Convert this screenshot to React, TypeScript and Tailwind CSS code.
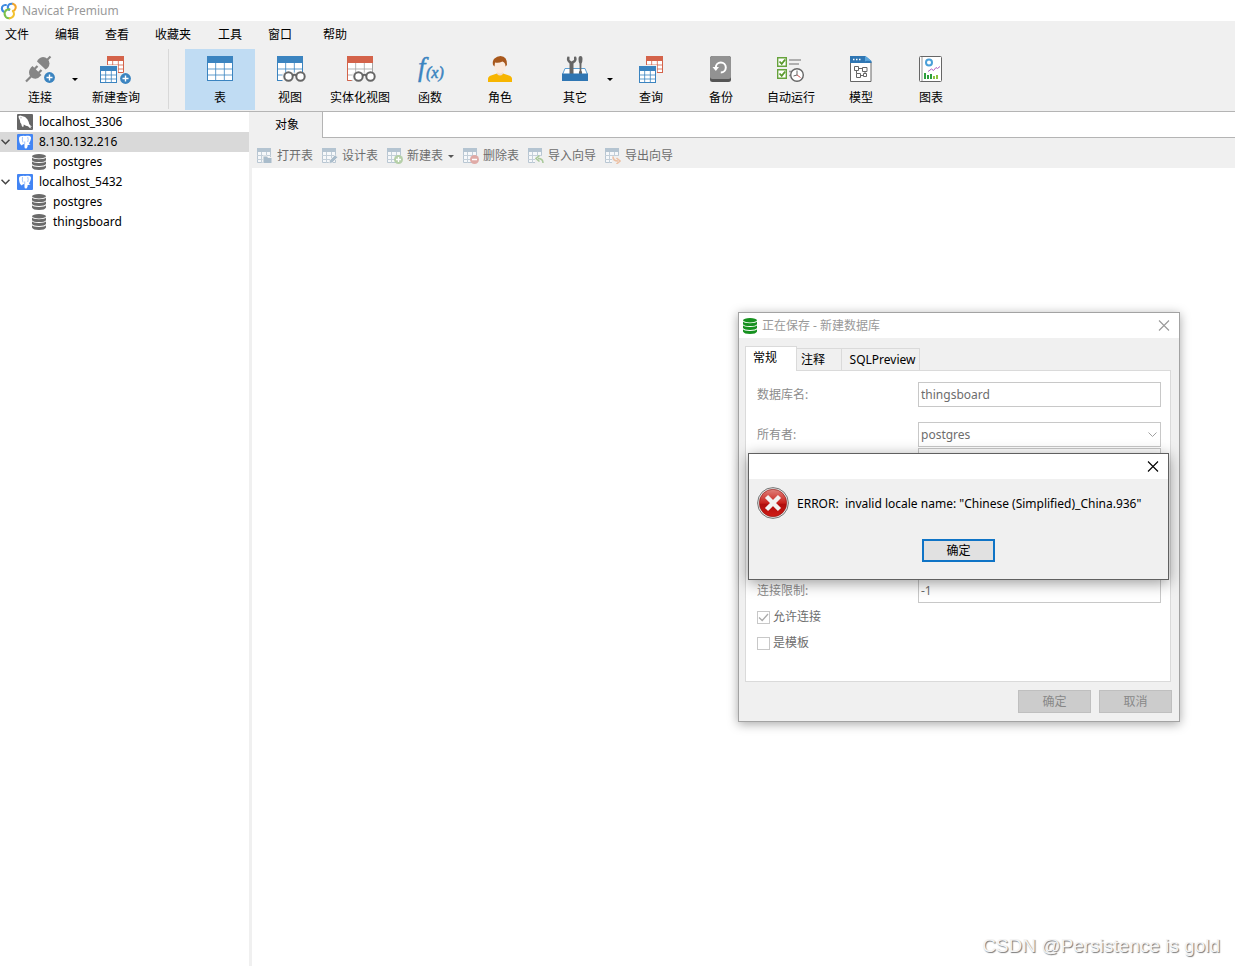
import { useState } from "react";
import type { ReactNode } from "react";

const BLUE = "#3b84c0";
const RED = "#d4634a";

/* ---------- icons ---------- */

function Grid({
  x,
  y,
  w,
  h,
  color,
  head = 5,
}: {
  x: number;
  y: number;
  w: number;
  h: number;
  color: string;
  head?: number;
}) {
  const cw = w / 3;
  const rh = (h - head) / 3;
  return (
    <g>
      <rect x={x + 0.5} y={y + 0.5} width={w - 1} height={h - 1} fill="#fff" stroke={color} />
      <rect x={x} y={y} width={w} height={head} rx="1" fill={color} />
      <path
        d={`M${x + cw} ${y + head}v${h - head}M${x + cw * 2} ${y + head}v${h - head}M${x} ${y + head + rh}h${w}M${x} ${y + head + rh * 2}h${w}`}
        stroke={color}
        strokeWidth="1"
        opacity="0.8"
      />
    </g>
  );
}

function PlusBadge({ x, y }: { x: number; y: number }) {
  return (
    <g>
      <circle cx={x} cy={y} r="6.2" fill="#f0f0f0" />
      <circle cx={x} cy={y} r="5.4" fill={BLUE} />
      <path d={`M${x - 3} ${y}h6M${x} ${y - 3}v6`} stroke="#fff" strokeWidth="1.4" />
    </g>
  );
}

function Glasses({ bg }: { bg: string }) {
  return (
    <g>
      <path d="M8.5 17.500h22v9.500h-22z" fill={bg} />
      <g fill="#fff" stroke="#666" strokeWidth="2">
        <circle cx="14.500" cy="21.500" r="4.200" />
        <circle cx="26.500" cy="21.500" r="4.200" />
        <path d="M18.500 20.500q2-1.600 4 0" fill="none" />
      </g>
    </g>
  );
}

function ToolSvg({ children }: { children: ReactNode }) {
  return (
    <svg viewBox="0 0 32 28" className="h-7 w-8 overflow-visible" fill="none" aria-hidden="true">
      {children}
    </svg>
  );
}

const icons: Record<string, ReactNode> = {
  plug: (
    <ToolSvg>
      <path d="M26.500 1.500l-4 4" stroke="#858585" strokeWidth="2.200" />
      <path d="M13 6.500q1.500-4 6-4.500q2.500 0 4.500 2t2 4.500q-.5 4.500-4 6z" fill="#858585" />
      <path d="M5 17.500q0-3.500 3.500-6.500l9 9q-3 3.500-6 3.700q-2.700.1-4.600-1.600t-1.900-4.600z" fill="#858585" />
      <path d="M2 26.500l5-5M10.500 14l3-3M14.500 18l3-3" stroke="#858585" strokeWidth="2.200" />
      <PlusBadge x={25.5} y={22.5} />
    </ToolSvg>
  ),
  newQuery: (
    <ToolSvg>
      <Grid x={7} y={1} w={17} h={17} color={RED} />
      <path d="M-1 10h19v19h-19z" fill="#f0f0f0" />
      <Grid x={0} y={11} w={17} h={17} color={BLUE} />
      <PlusBadge x={25.5} y={23.5} />
    </ToolSvg>
  ),
  table: (
    <ToolSvg>
      <Grid x={3} y={1} w={26} h={25} color={BLUE} head={7} />
    </ToolSvg>
  ),
  view: (
    <ToolSvg>
      <Grid x={3} y={1} w={26} h={25} color={BLUE} head={7} />
      <Glasses bg="#f0f0f0" />
    </ToolSvg>
  ),
  matView: (
    <ToolSvg>
      <Grid x={3} y={1} w={26} h={25} color="#a5a5a5" head={7} />
      <path d="M3 1h26v7h-26z" fill={RED} />
      <path d="M3.500 8v17.500h4" stroke={RED} />
      <Glasses bg="#f0f0f0" />
    </ToolSvg>
  ),
  fn: (
    <ToolSvg>
      <text x="4" y="21" fill={BLUE} stroke={BLUE} strokeWidth=".4" fontFamily="Liberation Serif, serif" fontStyle="italic" fontSize="27">
        f
      </text>
      <text x="12" y="23" fill={BLUE} stroke={BLUE} strokeWidth=".5" fontFamily="Liberation Serif, serif" fontStyle="italic" fontSize="16">
        (x)
      </text>
    </ToolSvg>
  ),
  role: (
    <ToolSvg>
      <path d="M4 27v-3q0-2.500 3-3.500l6-2h6l6 2q3 1 3 3.500v3z" fill="#f7b500" />
      <path d="M13 15h6v4q-3 3-6 0z" fill="#f3ddcb" />
      <path d="M10 6h12v5q-.5 6-6 7.500q-5.500-1.500-6-7.500z" fill="#fbeadd" />
      <path d="M9 10q-1-4 1.500-6.500t6-2.500q7 .5 6.500 9l-1.500 1.500q0-4-3-5q-4 2-7.500 1l-.5 4z" fill="#a8581c" />
    </ToolSvg>
  ),
  tools: (
    <ToolSvg>
      <path d="M6 13.500h20l2.500 6h-25z" fill="#fff" stroke="#5b9fd4" />
      <path
        d="M8.500 1.500q-1.500 3 .5 5.500l1.500 1.500v11h4v-11l2-1.500q2-2.500.5-5.500l-2 .2v3.300l-2.500 1.500l-2-1.500v-3.300z"
        fill="#666"
      />
      <path d="M21.500 1q2 0 2 3q0 3-1 4.500l-.2 7q1.200 1 .7 4h-3q-.5-3 .7-4l-.2-7q-1-1.500-1-4.500q0-3 2-3z" fill="#666" />
      <path d="M3 18.500h26v7.500h-26z" fill="#2f76b3" />
    </ToolSvg>
  ),
  query: (
    <ToolSvg>
      <Grid x={11} y={1} w={17} h={17} color={RED} />
      <path d="M3 10h19v19h-19z" fill="#f0f0f0" />
      <Grid x={4} y={11} w={17} h={17} color={BLUE} />
    </ToolSvg>
  ),
  backup: (
    <ToolSvg>
      <rect x="5" y="1" width="21" height="26" rx="2.500" fill="#555" />
      <rect x="5" y="1" width="21" height="23" rx="2.500" fill="#929292" />
      <path d="M10.800 12.500a5 5 0 1 1 5 5" stroke="#fff" strokeWidth="2" />
      <path d="M7.500 12h6.500l-3.200 4z" fill="#fff" />
    </ToolSvg>
  ),
  auto: (
    <ToolSvg>
      <path d="M2.700 2.700h8.600v8.600h-8.600zM2.700 14.700h8.600v8.600h-8.600z" fill="#fff" stroke="#67a33c" strokeWidth="1.400" />
      <path d="M4.500 6.500l2.200 2.300l3.500-4.300M4.500 18.500l2.200 2.300l3.500-4.300" stroke="#5b9a2e" strokeWidth="1.800" />
      <path d="M14 5h12M14 9h10M14 16.500h3M14 20.500h1" stroke="#999" strokeWidth="1.600" />
      <circle cx="22" cy="20" r="6.300" fill="#fff" stroke="#666" strokeWidth="1.400" />
      <path d="M22 15.500v4.500l-3.500 1" stroke="#666" />
      <path d="M22 20l3.500 2.500" stroke="#c55" />
    </ToolSvg>
  ),
  model: (
    <ToolSvg>
      <path d="M5.500 1.500h15l5.500 5.500v19.500h-20.500z" fill="#fff" stroke="#666" />
      <path d="M5 1h15l6.500 5v2h-21.500z" fill="#2f76b3" />
      <path d="M20 1q3 1 6.500 5.500q-4-1.500-6.500 0z" fill="#5aa5dc" />
      <path d="M8 4.500h1.500M11 4.500h1.500M14 4.500h1.500" stroke="#fff" strokeWidth="1.400" />
      <path
        d="M9.500 11.500h4v4h-4zM17.500 12.500h4.500v4h-4.500zM11.500 18.500h4v4h-4zM18.500 18.500h3v3h-3zM13.500 13.500h4M11.500 15.500v3M20 16.500v2M15.500 20.500h3"
        stroke="#666"
      />
    </ToolSvg>
  ),
  chart: (
    <ToolSvg>
      <rect x="4.500" y="1.500" width="22" height="25" rx="1" fill="#fff" stroke="#666" />
      <path d="M7 2v24" stroke="#999" />
      <circle cx="14" cy="7.500" r="3" stroke="#4aa0d8" strokeWidth="2" />
      <path d="M13 16.500l3.500-2.500l2 1.500l2.500-3l1.500 1l2.500-2" stroke="#b05cc0" />
      <path d="M10 18v6M13 20v4M16 19v5" stroke="#2e9e3e" strokeWidth="2" />
      <path d="M19 21v3M22 20v4" stroke="#8ac43f" strokeWidth="2" />
    </ToolSvg>
  ),
};

function Caret({ color = "#000" }: { color?: string }) {
  return (
    <svg viewBox="0 0 6 3" className="h-[3px] w-1.5 shrink-0" aria-hidden="true">
      <path d="M0 0h6l-3 3z" fill={color} />
    </svg>
  );
}

function CloseIcon() {
  return (
    <svg viewBox="0 0 12 12" className="size-3" stroke="currentColor" strokeWidth="1.100" aria-hidden="true">
      <path d="M1 .500l10 10M11 .500l-10 10" />
    </svg>
  );
}

// stack of four discs
function DbIcon({ color }: { color: string }) {
  return (
    <svg viewBox="0 0 16 16" className="size-4 shrink-0" fill={color} aria-hidden="true">
      <ellipse cx="8" cy="2.200" rx="7" ry="2.200" />
      <path d="M1 3.500q1 1.700 7 1.700t7-1.700v2.700q-1 1.900-7 1.900t-7-1.900zM1 7.300q1 1.700 7 1.700t7-1.700v2.700q-1 1.900-7 1.900t-7-1.900zM1 11.200q1 1.700 7 1.700t7-1.700v2.300q-1 2.500-7 2.500t-7-2.500z" />
    </svg>
  );
}

function MysqlIcon() {
  return (
    <svg viewBox="0 0 16 16" className="size-4 shrink-0" aria-hidden="true">
      <rect width="16" height="16" rx="1" fill="#666" />
      <path
        d="M1.500 2.200q1.500-1.500 3.500-.2q3.500.3 5.500 3.500q1.300 2.200 1.700 4.500q1 1.700 2.800 2.500q-1.200.2-2 .1q.5 1 1.500 2q-2.300-.5-3.500-2.300q-2-.3-4.300-1.800q.2 1.500-.7 2.700q-1.500-1-1.700-3.200q-1.500-1.500-1.300-3.500q-1.500-2-1.500-4.300z"
        fill="#fff"
      />
      <circle cx="4" cy="3.800" r=".5" fill="#666" />
    </svg>
  );
}

function PgIcon() {
  return (
    <svg viewBox="0 0 16 16" className="size-4 shrink-0" aria-hidden="true">
      <rect width="16" height="16" rx="1" fill="#4285f4" />
      <path
        d="M2 5q-.2-3.300 3-3q1.500-.6 3 0q1.500-.6 3-.2q3.200-.2 3 2.700q-.5 3-2.200 5.200l1.700.3q-1 1.200-2.800 1q.1 2.800-1.200 3.500q-2 .5-2-1.600v-2.900l-1.500.3l-1.300 1.200q-2.500-1.500-2.700-6.500z"
        fill="#fff"
      />
      <path d="M5.500 3q-.6 3 .5 5.500M10.700 3q1 2.500 0 5M7.700 7.500v2.500" stroke="#7eacf8" strokeWidth=".7" fill="none" />
    </svg>
  );
}

function NavicatLogo() {
  return (
    <svg viewBox="0 0 18 18" className="size-[18px]" fill="none" strokeWidth="2" strokeLinecap="round" aria-hidden="true">
      <path d="M6 3q-2.800-.5-3.900 2q-.9 3 1.500 4.700" stroke="#3f8ae0" />
      <path d="M9 8q-2.300-3-.3-5.200q1.800-1.600 4.100-1" stroke="#3f8ae0" />
      <path d="M13 1.900q3.200 1.100 2.700 4.200q-.6 2.300-2.700 3" stroke="#f4a62a" />
      <path d="M9.500 7.300q-3.500 0-4.700 2.700q-.8 3 1 4.900q1.800 1.700 4 1.300" stroke="#7cc04a" />
      <path d="M9.800 16.200q3.900-.9 4.200-4q0-2-1.200-3.300" stroke="#f2c230" />
    </svg>
  );
}

function ObjIcon({ mark }: { mark: ReactNode }) {
  return (
    <svg viewBox="0 0 16 16" className="size-4 shrink-0" fill="none" aria-hidden="true">
      <path d="M.5.500h13v14h-13z" fill="#f6f8fa" stroke="#b8c6d2" />
      <path d="M0 0h14v4h-14z" fill="#b4c4d1" />
      <path d="M4.500 4v11M9.500 4v11M0 7.500h14M0 11.500h14" stroke="#c3cfd9" />
      {mark}
    </svg>
  );
}

/* ---------- data ---------- */

const menus = [
  { name: "文件", width: "w-[50px]" },
  { name: "编辑", width: "w-[50px]" },
  { name: "查看", width: "w-[50px]" },
  { name: "收藏夹", width: "w-[63px]" },
  { name: "工具", width: "w-[50px]" },
  { name: "窗口", width: "w-[55px]" },
  { name: "帮助", width: "w-[50px]" },
];

const tools = [
  { name: "表", icon: "table" },
  { name: "视图", icon: "view" },
  { name: "实体化视图", icon: "matView" },
  { name: "函数", icon: "fn" },
  { name: "角色", icon: "role" },
  { name: "其它", icon: "tools", more: true },
  { name: "查询", icon: "query" },
  { name: "备份", icon: "backup" },
  { name: "自动运行", icon: "auto" },
  { name: "模型", icon: "model" },
  { name: "图表", icon: "chart" },
];

const tree = [
  { name: "localhost_3306", kind: "mysql", open: false },
  { name: "8.130.132.216", kind: "pg", open: true },
  { name: "postgres", kind: "db", open: false },
  { name: "localhost_5432", kind: "pg", open: true },
  { name: "postgres", kind: "db", open: false },
  { name: "thingsboard", kind: "db", open: false },
];

const actions = [
  {
    name: "打开表",
    mark: <path d="M6 8h4l1 1.500h4v6h-9z" fill="#a9bccb" stroke="#f0f0f0" />,
  },
  {
    name: "设计表",
    mark: <path d="M7 15.500l.7-3.200l5.500-5.500l2.500 2.500l-5.500 5.500z" fill="#a9bccb" stroke="#f0f0f0" strokeWidth=".8" />,
  },
  {
    name: "新建表",
    more: true,
    mark: (
      <>
        <circle cx="11.500" cy="11.500" r="4.500" fill="#b5cfa8" />
        <path d="M9 11.500h5M11.500 9v5" stroke="#fff" strokeWidth="1.300" />
      </>
    ),
  },
  {
    name: "删除表",
    mark: (
      <>
        <circle cx="11.500" cy="11.500" r="4.500" fill="#dfaaa6" />
        <path d="M9 11.500h5" stroke="#fff" strokeWidth="1.500" />
      </>
    ),
  },
  {
    name: "导入向导",
    mark: (
      <>
        <path d="M7 8h9v8h-9z" fill="#f0f0f0" />
        <path d="M15 15q0-4.500-5-4.500M11.500 7.500l-3.500 3l3.500 3" stroke="#a9c99a" strokeWidth="1.600" />
      </>
    ),
  },
  {
    name: "导出向导",
    mark: (
      <>
        <path d="M7 8h9v8h-9z" fill="#f0f0f0" />
        <path d="M8 8.500q0 4.500 5 4.500M11.500 10l3.500 3l-3.500 3" stroke="#ecc0a4" strokeWidth="1.600" />
      </>
    ),
  },
];

/* ---------- parts ---------- */

function ToolButton({
  name,
  icon,
  active = false,
  onClick,
}: {
  name: string;
  icon: string;
  active?: boolean;
  onClick?: () => void;
}) {
  return (
    <button
      type="button"
      onClick={onClick}
      className={`flex h-[61px] w-[70px] shrink-0 flex-col items-center gap-[5px] pt-1.5 leading-5 whitespace-nowrap ${
        active ? "bg-[#c0dcf3]" : ""
      }`}
    >
      {icons[icon]}
      {name}
    </button>
  );
}

// tool button followed by a drop-down arrow
function MenuToolButton({ name, icon }: { name: string; icon: string }) {
  return (
    <div className="flex w-[81px] items-center pl-[5px]">
      <ToolButton name={name} icon={icon} />
      <span className="-ml-[3px]">
        <Caret />
      </span>
    </div>
  );
}

function Field({ id, label, children }: { id: string; label: string; children: ReactNode }) {
  return (
    <div className="flex h-[25px] items-center">
      <label htmlFor={id} className="w-[161px] shrink-0 text-[#8c8c8c]">
        {label}
      </label>
      {children}
    </div>
  );
}

function DatabaseDialog() {
  return (
    <section className="absolute top-[312px] left-[738px] w-[442px] border border-[#a3a3a3] bg-[#f0f0f0] shadow-[0_2px_10px_rgba(0,0,0,0.35)]">
      <header className="flex h-[25px] items-center gap-1 bg-white pr-[9px] pl-[3px] text-[#999]">
        <DbIcon color="#16911f" />
        <h2 className="flex-1 leading-6">正在保存 - 新建数据库</h2>
        <button type="button" aria-label="关闭">
          <CloseIcon />
        </button>
      </header>

      <div className="pt-2 pr-[7px] pb-2 pl-1.5">
        <div className="flex items-end" role="tablist">
          <button
            type="button"
            role="tab"
            className="relative -mb-px h-[25px] w-[52px] border border-b-0 border-[#dadada] bg-white pr-3 pb-0.5"
          >
            常规
          </button>
          <button type="button" role="tab" className="h-[22px] w-[45px] border-t border-r border-[#dadada] pr-3">
            注释
          </button>
          <button type="button" role="tab" className="h-[22px] w-[78px] border-t border-r border-[#dadada] pl-1">
            SQLPreview
          </button>
        </div>

        <div className="mr-px flex h-[312px] flex-col border border-[#dadada] bg-white pt-[11px] pr-[9px] pl-[11px]">
          <div className="flex flex-col gap-[15px]">
            <Field id="db-name" label="数据库名:">
              <input
                id="db-name"
                disabled
                defaultValue="thingsboard"
                className="h-[25px] min-w-0 flex-1 border border-[#c8c8c8] px-0.5 text-[#6d6d6d]"
              />
            </Field>
            <Field id="db-owner" label="所有者:">
              <div className="relative flex h-[25px] min-w-0 flex-1">
                <select
                  id="db-owner"
                  disabled
                  className="w-full appearance-none border border-[#c8c8c8] px-0.5 text-[#6d6d6d] opacity-100"
                >
                  <option>postgres</option>
                </select>
                <svg
                  viewBox="0 0 9 5"
                  className="absolute top-2.5 right-1 h-[5px] w-[9px]"
                  fill="none"
                  stroke="#a0a0a0"
                  aria-hidden="true"
                >
                  <path d="M.5.500l4 4l4-4" />
                </svg>
              </div>
            </Field>
          </div>
          <div className="mt-px mb-[105px] ml-[161px] h-[25px] border border-[#c8c8c8]" />
          <Field id="db-limit" label="连接限制:">
            <input
              id="db-limit"
              disabled
              defaultValue="-1"
              className="h-[25px] min-w-0 flex-1 border border-[#c8c8c8] px-0.5 text-[#6d6d6d]"
            />
          </Field>
          <div className="mt-1 flex flex-col gap-1.5 text-[#6d6d6d]">
            <label className="flex h-5 items-center gap-[3px]">
              <span className="relative size-[13px]">
                <input
                  type="checkbox"
                  defaultChecked
                  disabled
                  className="block size-[13px] appearance-none border border-[#c8c8c8] bg-white"
                />
                <svg viewBox="0 0 13 13" className="absolute inset-0" fill="none" stroke="#aaa" strokeWidth="1.300" aria-hidden="true">
                  <path d="M2 6.500l3.200 3l5.800-6.500" />
                </svg>
              </span>
              允许连接
            </label>
            <label className="flex h-5 items-center gap-[3px]">
              <input
                type="checkbox"
                disabled
                className="block size-[13px] appearance-none border border-[#c8c8c8] bg-white"
              />
              是模板
            </label>
          </div>
        </div>

        <div className="flex justify-end gap-2 pt-2 text-[#888]">
          <button type="button" disabled className="h-[23px] w-[73px] border border-[#bfbfbf] bg-[#ccc]">
            确定
          </button>
          <button type="button" disabled className="h-[23px] w-[73px] border border-[#bfbfbf] bg-[#ccc]">
            取消
          </button>
        </div>
      </div>
    </section>
  );
}

function ErrorDialog() {
  return (
    <section
      role="alertdialog"
      className="absolute top-[453px] left-[748px] w-[421px] border border-[#606060] bg-[#f0f0f0] pb-[17px] shadow-[0_3px_14px_rgba(0,0,0,0.4)]"
    >
      <header className="flex h-[25px] items-center justify-end bg-white pr-[9px]">
        <button type="button" aria-label="关闭">
          <CloseIcon />
        </button>
      </header>
      <div className="flex items-center gap-2 px-2 pt-2">
        <svg viewBox="0 0 32 32" className="size-8 shrink-0" aria-hidden="true">
          <defs>
            <linearGradient id="err" x1="0" y1="0" x2="0" y2="1">
              <stop offset="0" stopColor="#e0807a" />
              <stop offset="0.500" stopColor="#c9211c" />
              <stop offset="0.550" stopColor="#b00d0d" />
              <stop offset="1" stopColor="#d01a14" />
            </linearGradient>
          </defs>
          <circle cx="16" cy="16" r="15.400" fill="#e6e6e6" stroke="#777" />
          <circle cx="16" cy="16" r="13.700" fill="url(#err)" stroke="#8f1512" strokeWidth=".6" />
          <path d="M9.500 9.500l13 13M22.500 9.500l-13 13" stroke="#f2f2f2" strokeWidth="4.400" />
        </svg>
        <p className="pt-px whitespace-pre">ERROR:  invalid locale name: "Chinese (Simplified)_China.936"</p>
      </div>
      <div className="flex justify-center pt-5">
        <button type="button" className="h-[23px] w-[73px] border-2 border-[#0f74c6] bg-[#e1e1e1] leading-4">
          确定
        </button>
      </div>
    </section>
  );
}

/* ---------- page ---------- */

export default function App() {
  const [activeTool, setActiveTool] = useState("表");
  const [selected, setSelected] = useState(1);

  return (
    <div className="relative flex min-h-screen flex-col overflow-hidden bg-white font-['Noto_Sans','Noto_Sans_CJK_SC',sans-serif] text-xs text-black">
      <header className="flex h-[21px] items-center gap-1 text-[#999]">
        <NavicatLogo />
        <h1 className="leading-5">Navicat Premium</h1>
      </header>

      <nav className="flex h-7 items-center bg-[#f0f0f0] pl-[5px]">
        {menus.map((m) => (
          <button key={m.name} type="button" className={`text-left ${m.width}`}>
            {m.name}
          </button>
        ))}
      </nav>

      <div className="flex h-[63px] items-start border-b border-[#b4b4b4] bg-[#f0f0f0]">
        <MenuToolButton name="连接" icon="plug" />
        <ToolButton name="新建查询" icon="newQuery" />
        <div className="mr-4 ml-[17px] h-[60px] w-px bg-[#d8d8d8]" />
        {tools.map((t) =>
          t.more ? (
            <MenuToolButton key={t.name} name={t.name} icon={t.icon} />
          ) : (
            <ToolButton
              key={t.name}
              name={t.name}
              icon={t.icon}
              active={activeTool === t.name}
              onClick={() => setActiveTool(t.name)}
            />
          ),
        )}
      </div>

      <div className="flex flex-1">
        <aside className="w-[252px] shrink-0 border-r-[3px] border-[#f0f0f0]">
          {tree.map((node, i) => (
            <button
              key={i}
              type="button"
              onClick={() => setSelected(i)}
              className={`flex h-5 w-full items-center ${selected === i ? "bg-[#d9d9d9]" : ""}`}
            >
              <span className={`shrink-0 pl-px ${node.kind === "db" ? "w-[31px]" : "w-[17px]"}`}>
                {node.open && (
                  <svg viewBox="0 0 9 6" className="h-1.5 w-[9px]" fill="none" stroke="#444" strokeWidth="1.500" aria-hidden="true">
                    <path d="M.5.700l4 4l4-4" />
                  </svg>
                )}
              </span>
              {node.kind === "mysql" && <MysqlIcon />}
              {node.kind === "pg" && <PgIcon />}
              {node.kind === "db" && <DbIcon color="#6b6b6b" />}
              <span className="pl-1.5">{node.name}</span>
            </button>
          ))}
        </aside>

        <main className="min-w-0 flex-1">
          <div className="flex h-[26px]">
            <button type="button" className="w-[70px] bg-[#f0f0f0]">
              对象
            </button>
            <div className="flex-1 border-b border-l border-[#b4b4b4]" />
          </div>
          <div className="flex h-[30px] items-center gap-[9px] bg-[#f0f0f0] pt-1.5 pl-[5px] text-[#6d6d6d]">
            {actions.map((a) => (
              <button key={a.name} type="button" className="flex items-center gap-1 whitespace-nowrap">
                <ObjIcon mark={a.mark} />
                {a.name}
                {a.more && (
                  <span className="pl-px">
                    <Caret color="#555" />
                  </span>
                )}
              </button>
            ))}
          </div>
        </main>
      </div>

      <DatabaseDialog />
      <ErrorDialog />

      <div className="absolute right-[15px] bottom-1.5 font-['Liberation_Sans',sans-serif] text-[19px] leading-7 text-[#f4f4f4] [text-shadow:1px_1px_1px_#777]">
        CSDN @Persistence is gold
      </div>
    </div>
  );
}
